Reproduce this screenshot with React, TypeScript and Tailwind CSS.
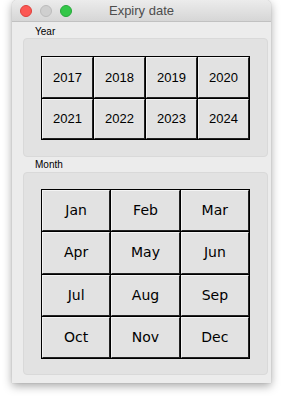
const YEARS = ["2017", "2018", "2019", "2020", "2021", "2022", "2023", "2024"]
const MONTHS = ["Jan", "Feb", "Mar", "Apr", "May", "Jun", "Jul", "Aug", "Sep", "Oct", "Nov", "Dec"]

const SANS = "font-['Liberation_Sans','Helvetica',sans-serif]"
const LUCIDA = "font-['DejaVu_Sans','Lucida_Grande',sans-serif]"

function Cell({ label, className }: { label: string; className: string }) {
  return (
    <div className="bg-[#e2e2e2] border border-t-[#f4f4f4] border-l-[#f4f4f4] border-r-[#222] border-b-[#222] flex items-center justify-center">
      <span className={className}>{label}</span>
    </div>
  )
}

export default function App() {
  return (
    <div className="w-[283px] h-[396px] bg-white pl-[12px] overflow-hidden">
      <div className="w-[259px] h-[383px] bg-[#ececec] rounded-t-[5px] shadow-[0_3px_10px_rgba(0,0,0,0.35),0_0_1px_rgba(0,0,0,0.3)] flex flex-col">
        {/* title bar */}
        <div className="relative h-[22px] rounded-t-[5px] bg-gradient-to-b from-[#ececec] to-[#d6d6d6] border-b border-[#c1c1c1] flex items-center pl-[8px] gap-[8px]">
          <span className="w-[12px] h-[12px] rounded-full bg-[#fc5753] border border-[#de3f3a]" />
          <span className="w-[12px] h-[12px] rounded-full bg-[#cfcfcf] border border-[#bcbcbc]" />
          <span className="w-[12px] h-[12px] rounded-full bg-[#33c748] border border-[#27a83a]" />
          <span className={`absolute inset-0 flex items-center justify-center text-[13px] text-[#4d4d4d] ${SANS}`}>
            Expiry date
          </span>
        </div>

        <div className="pl-[11px] pr-[3px] flex flex-col">
          <div className={`h-[16px] pt-[4px] pl-[12px] text-[10px] leading-[12px] text-black ${SANS}`}>Year</div>
          <div className="h-[119px] rounded-[4px] bg-[#e2e2e2] border border-[#d9d9d9] pt-[17px] pl-[17px]">
            <div className="w-[209px] h-[84px] grid grid-cols-4 grid-rows-2 gap-[1px] bg-black border border-black">
              {YEARS.map((y) => (
                <Cell key={y} label={y} className={`text-[13px] text-black ${SANS}`} />
              ))}
            </div>
          </div>

          <div className={`h-[15px] pt-[2px] pl-[12px] text-[10px] leading-[12px] text-black ${SANS}`}>Month</div>
          <div className="h-[203px] rounded-[4px] bg-[#e2e2e2] border border-[#d9d9d9] pt-[16px] pl-[17px]">
            <div className="w-[209px] h-[170px] grid grid-cols-3 grid-rows-4 gap-[1px] bg-black border border-black">
              {MONTHS.map((m) => (
                <Cell key={m} label={m} className={`text-[14px] text-black ${LUCIDA}`} />
              ))}
            </div>
          </div>
        </div>
      </div>
    </div>
  )
}
